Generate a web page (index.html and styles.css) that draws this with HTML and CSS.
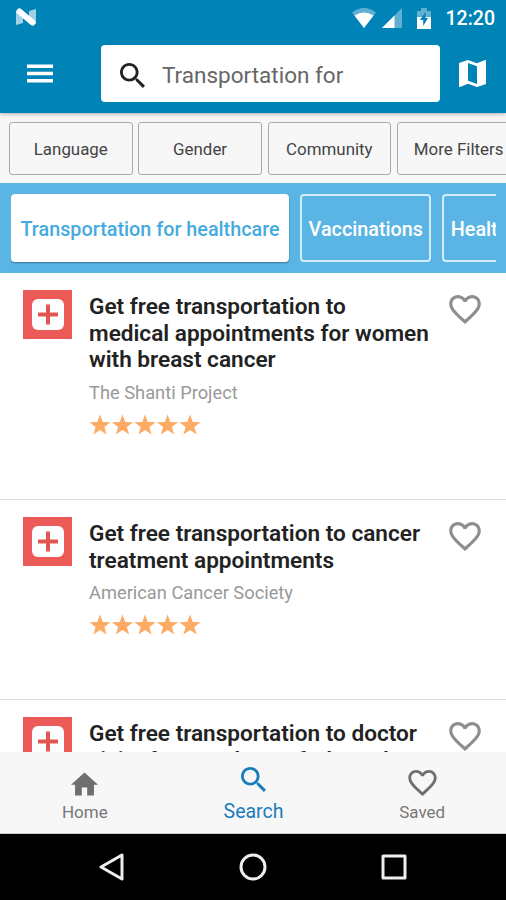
FILE: index.html
```html
<!DOCTYPE html>
<html lang="en">
<head>
  <meta charset="UTF-8">
  <meta name="viewport" content="width=device-width, initial-scale=1.0">
  <title>Search</title>
  <link rel="stylesheet" href="styles.css">
</head>
<body>
  <!-- Shared icons -->
  <svg class="sprite">
    <symbol id="heart" viewBox="2 3 20 18.35">
      <path d="M16.5 3c-1.74 0-3.41.81-4.5 2.09C10.91 3.81 9.24 3 7.5 3 4.42 3 2 5.42 2 8.5c0 3.78 3.4 6.86 8.55 11.54L12 21.35l1.45-1.32C18.6 15.36 22 12.28 22 8.5 22 5.42 19.58 3 16.5 3zm-4.4 15.55l-.1.1-.1-.1C7.14 14.24 4 11.39 4 8.5 4 6.5 5.5 5 7.5 5c1.54 0 3.04.99 3.57 2.36h1.87C13.46 5.99 14.96 5 16.5 5c2 0 3.5 1.5 3.5 3.5 0 2.89-3.14 5.74-7.9 10.05z"/>
    </symbol>
    <symbol id="search" viewBox="3 3 17.5 17.5">
      <path d="M15.5 14h-.79l-.28-.27C15.41 12.59 16 11.11 16 9.5 16 5.91 13.09 3 9.5 3S3 5.91 3 9.5 5.91 16 9.5 16c1.61 0 3.09-.59 4.23-1.57l.27.28v.79l5 4.99L20.49 19l-4.99-5zm-6 0C7.01 14 5 11.99 5 9.5S7.01 5 9.5 5 14 7.01 14 9.5 11.99 14 9.5 14z"/>
    </symbol>
    <symbol id="stars" viewBox="0 0 112 22">
      <path id="star" d="M11 .5l2.7 7.4 7.9.3-6.2 4.8 2.2 7.5L11 16.1l-6.6 4.4L6.6 13 .4 8.2l7.9-.3z"/>
      <use href="#star" x="22.5"/>
      <use href="#star" x="45"/>
      <use href="#star" x="67.5"/>
      <use href="#star" x="90"/>
    </symbol>
    <symbol id="medical" viewBox="0 0 49 49">
      <rect width="49" height="49" fill="#eb5a56"/>
      <rect x="9" y="9" width="32" height="31" rx="6" fill="#fff"/>
      <path d="M15 24.5h20M25 14.5v20" stroke="#e35552" stroke-width="4"/>
    </symbol>
  </svg>

  <div class="screen">
    <header class="header">
      <div class="status-bar">
        <svg class="status-n" viewBox="0 0 22 18">
          <path d="M1 3L8 6v9l-7 2zM14 3l7-2v15l-7-4z" fill="#9fd0e6"/>
          <path d="M4.5 3.5L17.5 14.5" stroke="#fff" stroke-width="6" stroke-linecap="round"/>
        </svg>
        <div class="status-icons">
          <svg class="wifi" viewBox="0 0 24 20">
            <path d="M0 4.5Q12-4.5 24 4.5L12 20z" fill="#5fb0d2"/>
            <path d="M2.5 7.5Q12 1.5 21.5 7.5L12 20z" fill="#fff"/>
          </svg>
          <svg class="signal" viewBox="0 0 20 20">
            <path d="M0 20L20 0v20z" fill="#5fb0d2"/>
            <path d="M0 20L12.5 7.5V20z" fill="#fff"/>
          </svg>
          <svg class="battery" viewBox="0 0 14 21">
            <path d="M0 3h4V0h6v3h4v7H0z" fill="#5fb0d2"/>
            <path d="M0 9h14v12H0z" fill="#fff"/>
            <path d="M8.5 4L3 12h3.2v6L11 10H8.5z" fill="#0083b6"/>
          </svg>
          <span class="clock">12:20</span>
        </div>
      </div>
      <div class="toolbar">
        <svg class="menu-icon" viewBox="0 0 27 19">
          <path d="M0 2h27M0 9.5h27M0 17h27" stroke="#fff" stroke-width="3.6"/>
        </svg>
        <div class="search-box">
          <svg class="search-icon"><use href="#search"/></svg>
          <span>Transportation for</span>
        </div>
        <svg class="map-icon" viewBox="3 3 18 18">
          <path d="M20.5 3l-.16.03L15 5.1 9 3 3.36 4.9c-.21.07-.36.25-.36.48V20.5c0 .28.22.5.5.5l.16-.03L9 18.9l6 2.1 5.64-1.9c.21-.07.36-.25.36-.48V3.5c0-.28-.22-.5-.5-.5zM15 19l-6-2.11V5l6 2.11V19z"/>
        </svg>
      </div>
    </header>

    <div class="filters">
      <button class="filter">Language</button>
      <button class="filter">Gender</button>
      <button class="filter">Community</button>
      <button class="filter">More Filters</button>
    </div>

    <div class="topics">
      <div class="topics-scroll">
        <button class="topic active">Transportation for healthcare</button>
        <button class="topic">Vaccinations</button>
        <button class="topic">Health</button>
      </div>
    </div>

    <main class="results">
      <article class="result">
        <svg class="result-icon"><use href="#medical"/></svg>
        <div class="result-body">
          <h2>Get free transportation to<br>medical appointments for women<br>with breast cancer</h2>
          <p>The Shanti Project</p>
          <svg class="stars"><use href="#stars"/></svg>
        </div>
        <svg class="like"><use href="#heart"/></svg>
      </article>
      <article class="result">
        <svg class="result-icon"><use href="#medical"/></svg>
        <div class="result-body">
          <h2>Get free transportation to cancer<br>treatment appointments</h2>
          <p>American Cancer Society</p>
          <svg class="stars"><use href="#stars"/></svg>
        </div>
        <svg class="like"><use href="#heart"/></svg>
      </article>
      <article class="result">
        <svg class="result-icon"><use href="#medical"/></svg>
        <div class="result-body">
          <h2>Get free transportation to doctor<br>visits for members of Alameda</h2>
        </div>
        <svg class="like"><use href="#heart"/></svg>
      </article>
    </main>

    <nav class="tabs">
      <div class="tab">
        <svg class="home-icon" viewBox="2 3 20 17"><path d="M10 20v-6h4v6h5v-8h3L12 3 2 12h3v8z"/></svg>
        <span>Home</span>
      </div>
      <div class="tab active">
        <svg class="tab-search"><use href="#search"/></svg>
        <span>Search</span>
      </div>
      <div class="tab">
        <svg class="tab-heart"><use href="#heart"/></svg>
        <span>Saved</span>
      </div>
    </nav>

    <div class="system-nav">
      <svg viewBox="0 0 28 28"><path d="M24 2v24L3 14z"/></svg>
      <svg viewBox="0 0 28 28"><circle cx="14" cy="14" r="12"/></svg>
      <svg viewBox="0 0 28 28"><rect x="3" y="3" width="22" height="22"/></svg>
    </div>
  </div>
</body>
</html>
```
FILE: styles.css
```css
* {
  box-sizing: border-box;
}

body {
  margin: 0;
  font-family: Roboto, sans-serif;
  background: #fff;
}

button {
  font-family: inherit;
  white-space: nowrap;
}

svg {
  display: block;
  flex-shrink: 0;
}

.sprite {
  display: none;
}

.screen {
  display: flex;
  flex-direction: column;
  height: 900px;
  overflow: hidden;
}

/* Header */
.header {
  height: 113px;
  flex-shrink: 0;
  background: #0083b6;
  box-shadow: 0 1px 4px rgba(0, 0, 0, 0.3);
  z-index: 1;
}

.status-bar {
  display: flex;
  justify-content: space-between;
  height: 36px;
  padding: 8px 11px 0 15px;
}

.status-n {
  width: 22px;
  height: 18px;
}

.status-icons {
  display: flex;
}

.wifi {
  width: 24px;
  height: 20px;
}

.signal {
  width: 20px;
  height: 20px;
  margin-left: 6px;
}

.battery {
  width: 14px;
  height: 21px;
  margin-left: 15px;
}

.clock {
  margin-left: 15px;
  color: #fff;
  font-size: 19.5px;
  font-weight: 500;
  line-height: 21px;
}

.toolbar {
  display: flex;
  align-items: center;
  padding: 9px 19px 0 27px;
}

.menu-icon {
  width: 26px;
  height: 19px;
}

.search-box {
  display: flex;
  align-items: center;
  gap: 17px;
  width: 339px;
  height: 57px;
  margin-left: 48px;
  padding: 3px 0 0 19px;
  border-radius: 4px;
  background: #fff;
  color: #666;
  font-size: 22.5px;
}

.search-icon {
  width: 25px;
  height: 25px;
  fill: #222;
}

.map-icon {
  width: 27px;
  height: 27px;
  margin-left: 19px;
  fill: #fff;
}

/* Filters */
.filters {
  display: flex;
  gap: 5.7px;
  height: 70px;
  flex-shrink: 0;
  padding: 9px 0 0 9px;
  background: #f7f7f7;
  overflow: hidden;
}

.filter {
  width: 123.6px;
  height: 53px;
  flex-shrink: 0;
  padding: 0;
  border: 1.5px solid #aaa;
  border-radius: 3px;
  background: #f7f7f7;
  color: #444;
  font-size: 16.9px;
}

/* Topics */
.topics {
  height: 90px;
  flex-shrink: 0;
  padding: 11px 10px 0 11px;
  background: #5ab5e5;
}

.topics-scroll {
  display: flex;
  gap: 11.2px;
  height: 72px;
  overflow: hidden;
}

.topic {
  height: 68px;
  flex-shrink: 0;
  padding: 2px 6.3px 0;
  border: 2px solid #d3ecf9;
  border-radius: 4px;
  background: transparent;
  color: #fff;
  font-size: 19.8px;
  font-weight: 500;
}

.topic.active {
  padding: 2px 7.5px 0;
  border-color: #fff;
  background: #fff;
  box-shadow: 0 1px 2px rgba(0, 0, 0, 0.35);
  color: #45abdf;
}

/* Results */
.results {
  flex: 1;
  min-height: 0;
  overflow: hidden;
}

.result {
  display: flex;
  padding: 17px 25px 62.7px 23px;
  border-bottom: 1px solid #ddd;
}

.result-icon {
  width: 49px;
  height: 49px;
}

.result-body {
  flex: 1;
  margin-left: 17px;
  padding-top: 4px;
}

.result h2 {
  margin: 0;
  color: #222;
  font-size: 22.6px;
  font-weight: 600;
  line-height: 26.7px;
  white-space: nowrap;
}

.result p {
  margin: 8px 0 10px;
  color: #999;
  font-size: 18.3px;
  line-height: 22px;
}

.stars {
  width: 112px;
  height: 22px;
  fill: #fdaa64;
}

.like {
  width: 32px;
  height: 29px;
  margin-top: 5px;
  fill: #8e8e8e;
}

/* Bottom tabs */
.tabs {
  display: flex;
  height: 82px;
  flex-shrink: 0;
  background: #f7f7f7;
  border-bottom: 1px solid #ccc;
}

.tab {
  display: flex;
  flex: 1;
  flex-direction: column;
  align-items: center;
  justify-content: flex-end;
  gap: 5px;
  padding: 0 0 10px 1px;
  color: #777;
  fill: #6e6e6e;
  font-size: 17px;
  line-height: 22px;
}

.tab.active {
  color: #1a7dbb;
  fill: #1a7dbb;
  font-size: 19.5px;
  gap: 9px;
}

.home-icon {
  width: 27px;
  height: 24px;
}

.tab-search {
  width: 25px;
  height: 25px;
}

.tab-heart {
  width: 29px;
  height: 26px;
}

/* System buttons */
.system-nav {
  display: flex;
  justify-content: center;
  align-items: center;
  gap: 113px;
  height: 66px;
  flex-shrink: 0;
  background: #000;
}

.system-nav svg {
  width: 28px;
  height: 28px;
  fill: none;
  stroke: #eee;
  stroke-width: 3;
  stroke-linejoin: round;
}
```
